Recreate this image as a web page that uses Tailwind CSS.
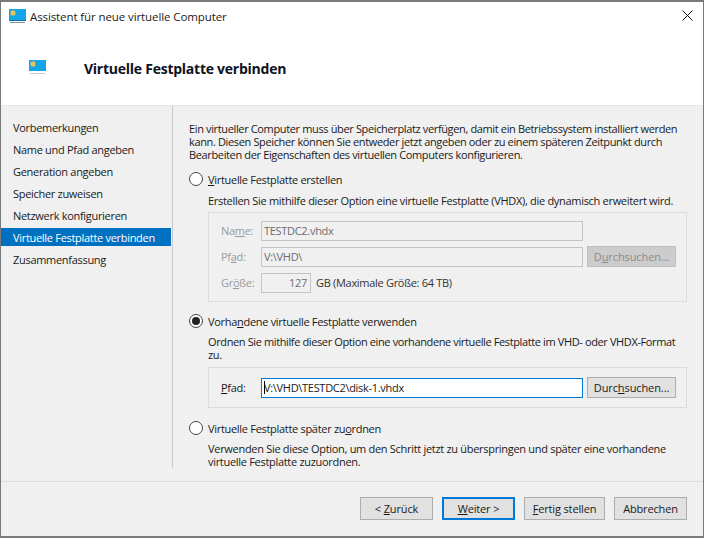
<!DOCTYPE html>
<html lang="de">
<head>
    <meta charset="UTF-8">
    <title>Assistent für neue virtuelle Computer</title>
    <script src="https://cdn.jsdelivr.net/npm/@tailwindcss/browser@4"></script>
</head>
<body class="w-[704px] h-[538px] overflow-hidden bg-[#f0f0f0] text-[#1a1a1a] text-[11px] tracking-[-0.3px] leading-[13px] font-['Open_Sans','Noto_Sans',sans-serif]">
<div class="flex flex-col h-[538px] border border-t-2 border-[#77797b] border-b-2">
    <!-- Header -->
    <header class="bg-white h-[104px] shrink-0 border-b border-[#e4e4e4]">
        <div class="flex items-center h-[29px] pl-[8px] pr-[10px]">
            <svg class="w-[17px] h-[16px] mr-[4px]" viewBox="0 0 17 16"><rect x="0" y="0" width="17" height="11" fill="#12a5ea"/><path d="M4 0.6L4.8 2L6.4 1.6L6 3.2L7.4 4L6 4.8L6.4 6.4L4.8 6L4 7.4L3.2 6L1.6 6.4L2 4.8L0.6 4L2 3.2L1.6 1.6L3.2 2Z" fill="#e8c35a"/><rect x="0" y="11" width="17" height="1" fill="#0b6fa8"/><rect x="1" y="13" width="15" height="1" fill="#7f93a3"/></svg>
            <span class="text-[11.5px] tracking-[-0.1px] text-[#222]">Assistent für neue virtuelle Computer</span>
            <svg class="ml-auto w-[11px] h-[11px] -mt-[2px]" viewBox="0 0 11 11"><path d="M0.5 0.5L10.5 10.5M10.5 0.5L0.5 10.5" stroke="#111" stroke-width="1" fill="none"/></svg>
        </div>
        <div class="flex items-center h-[74px] pl-[28px]">
            <svg class="w-[17px] h-[16px] mr-[38px]" viewBox="0 0 17 16"><rect x="0" y="0" width="17" height="11" fill="#12a5ea"/><path d="M4 0.6L4.8 2L6.4 1.6L6 3.2L7.4 4L6 4.8L6.4 6.4L4.8 6L4 7.4L3.2 6L1.6 6.4L2 4.8L0.6 4L2 3.2L1.6 1.6L3.2 2Z" fill="#e8c35a"/><rect x="1" y="13" width="15" height="1" fill="#c4ccd2"/></svg>
            <h1 class="text-[14px] tracking-[-0.25px] font-bold text-[#0d1220]">Virtuelle Festplatte verbinden</h1>
        </div>
    </header>

    <!-- Body -->
    <div class="flex h-[376px] shrink-0 border-b border-[#dedede]">
        <nav class="w-[171px] shrink-0 pt-[10px] mb-[13px] box-content border-r border-[#c9c9c9]">
            <ul class="w-[170px]">
                <li class="h-[22px] pl-[12px] flex items-center">Vorbemerkungen</li>
                <li class="h-[22px] pl-[12px] flex items-center">Name und Pfad angeben</li>
                <li class="h-[22px] pl-[12px] flex items-center">Generation angeben</li>
                <li class="h-[22px] pl-[12px] flex items-center">Speicher zuweisen</li>
                <li class="h-[22px] pl-[12px] flex items-center">Netzwerk konfigurieren</li>
                <li class="h-[18px] my-[2px] pl-[12px] flex items-center bg-[#0071c0] text-white">Virtuelle Festplatte verbinden</li>
                <li class="h-[22px] pl-[12px] flex items-center">Zusammenfassung</li>
            </ul>
        </nav>

        <main class="flex-1 pl-[16px] pr-[16px] pt-[16px]">
            <p class="w-[495px] tracking-[-0.36px]">Ein virtueller Computer muss über Speicherplatz verfügen, damit ein Betriebssystem installiert werden kann. Diesen Speicher können Sie entweder jetzt angeben oder zu einem späteren Zeitpunkt durch Bearbeiten der Eigenschaften des virtuellen Computers konfigurieren.</p>

            <div class="flex items-center h-[14px] mt-[11px]">
                <span class="w-[14px] h-[14px] rounded-full border border-[#444] bg-white mr-[5px]"></span>
                <span><u>V</u>irtuelle Festplatte erstellen</span>
            </div>
            <p class="ml-[19px] mt-[8px]">Erstellen Sie mithilfe dieser Option eine virtuelle Festplatte (VHDX), die dynamisch erweitert wird.</p>

            <div class="ml-[19px] mt-[5px] w-[479px] h-[90px] border border-[#dcdcdc] pl-[12px] pt-[7px] text-[#9a9a9a] flex flex-col gap-[5px]">
                <div class="flex items-center h-[21px]">
                    <span class="w-[40px]">Na<u>m</u>e:</span>
                    <div class="w-[322px] h-[20px] border border-[#c4c4c4] bg-[#f0f0f0] px-[2px] flex items-center text-[#6d6d6d]">TESTDC2.vhdx</div>
                </div>
                <div class="flex items-center h-[21px]">
                    <span class="w-[40px]">Pf<u>a</u>d:</span>
                    <div class="w-[322px] h-[20px] border border-[#c4c4c4] bg-[#f0f0f0] px-[2px] flex items-center text-[#6d6d6d]">V:\VHD\</div>
                    <div class="ml-[4px] w-[89px] h-[21px] bg-[#cccccc] border border-[#c0c0c0] flex items-center justify-center tracking-[-0.1px] text-[#8b8b8b]">D<u>u</u>rchsuchen...</div>
                </div>
                <div class="flex items-center h-[21px]">
                    <span class="w-[40px]">Gr<u>ö</u>ße:</span>
                    <div class="w-[50px] h-[20px] border border-[#c4c4c4] bg-[#f0f0f0] px-[3px] flex items-center justify-end text-[#6d6d6d]">127</div>
                    <span class="ml-[5px] text-[#333]">GB (Maximale Größe: 64 TB)</span>
                </div>
            </div>

            <div class="flex items-center h-[14px] mt-[12px]">
                <span class="w-[14px] h-[14px] rounded-full border border-[#444] bg-white mr-[5px] flex items-center justify-center"><span class="w-[8px] h-[8px] rounded-full bg-[#222]"></span></span>
                <span>Vorha<u>n</u>dene virtuelle Festplatte verwenden</span>
            </div>
            <p class="ml-[19px] mt-[7px] w-[478px] tracking-[-0.38px]">Ordnen Sie mithilfe dieser Option eine vorhandene virtuelle Festplatte im VHD- oder VHDX-Format zu.</p>

            <div class="ml-[19px] mt-[6px] w-[479px] h-[41px] border border-[#dcdcdc] pl-[12px] flex items-center">
                <span class="w-[40px]"><u>P</u>fad:</span>
                <div class="w-[322px] h-[20px] border border-[#0078d7] bg-white px-[2px] flex items-center"><span class="w-px h-[13px] bg-black -mr-px"></span>V:\VHD\TESTDC2\disk-1.vhdx</div>
                <div class="ml-[4px] w-[89px] h-[21px] bg-[#e1e1e1] border border-[#adadad] flex items-center justify-center tracking-[-0.1px]">Durc<u>h</u>suchen...</div>
            </div>

            <div class="flex items-center h-[14px] mt-[13px]">
                <span class="w-[14px] h-[14px] rounded-full border border-[#444] bg-white mr-[5px]"></span>
                <span>Virtuelle Festplatte später zu<u>o</u>rdnen</span>
            </div>
            <p class="ml-[19px] mt-[7px] w-[470px]">Verwenden Sie diese Option, um den Schritt jetzt zu überspringen und später eine vorhandene virtuelle Festplatte zuzuordnen.</p>
        </main>
    </div>

    <!-- Footer -->
    <footer class="flex-1 flex justify-end items-start gap-[9px] pt-[15px] pr-[16px] tracking-[-0.15px]">
        <button class="w-[73px] h-[23px] bg-[#e1e1e1] border border-[#adadad]">&lt; <u>Z</u>urück</button>
        <button class="w-[73px] h-[23px] bg-[#e1e1e1] border-2 border-[#0078d7]"><u>W</u>eiter &gt;</button>
        <button class="w-[81px] h-[23px] bg-[#e1e1e1] border border-[#adadad]"><u>F</u>ertig stellen</button>
        <button class="w-[73px] h-[23px] bg-[#e1e1e1] border border-[#adadad]">Abbrechen</button>
    </footer>
</div>
</body>
</html>
